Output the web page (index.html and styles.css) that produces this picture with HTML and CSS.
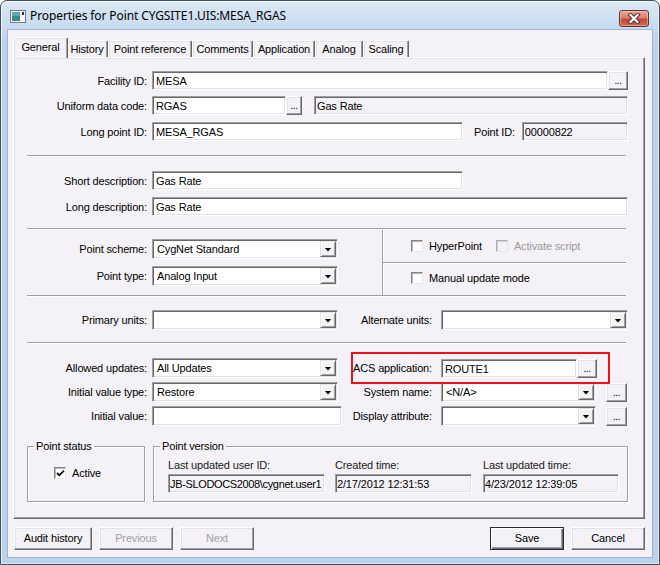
FILE: index.html
```html
<!DOCTYPE html>
<html>
<head>
<meta charset="utf-8">
<title>Properties for Point</title>
<link rel="stylesheet" href="styles.css">
</head>
<body>
<div class="window">
  <div class="titlebar">
    <svg class="appicon" width="16" height="13" viewBox="0 0 16 13">
      <rect x="0.5" y="0.5" width="15" height="12" fill="#f4f6f8" stroke="#6f7a86"/>
      <rect x="2" y="2" width="8" height="9" fill="#3a8a8c"/>
      <rect x="2" y="2" width="8" height="4" fill="#5fa9b8"/>
      <rect x="12" y="2" width="2" height="3" fill="#2b3640"/>
    </svg>
    <span class="title">Properties for Point CYGSITE1.UIS:MESA_RGAS</span>
    <div class="close">
      <svg width="14" height="11" viewBox="0 0 14 11">
        <path d="M3.5 2 L10.5 9 M10.5 2 L3.5 9" stroke="#5a2b25" stroke-width="4.2" stroke-linecap="square"/>
        <path d="M3.5 2 L10.5 9 M10.5 2 L3.5 9" stroke="#ffffff" stroke-width="2.2" stroke-linecap="square"/>
      </svg>
    </div>
  </div>

  <div class="client">
    <div class="tabs">
      <div class="tab active t-general">General</div>
      <div class="tab t-history">History</div>
      <div class="tab t-pref">Point reference</div>
      <div class="tab t-comments">Comments</div>
      <div class="tab t-app">Application</div>
      <div class="tab t-analog">Analog</div>
      <div class="tab t-scaling">Scaling</div>
    </div>

    <div class="panel">
      <div class="row">
        <span class="lbl">Facility ID:</span>
        <div class="edit grow">MESA</div>
        <div class="dots w20">...</div>
      </div>
      <div class="row mt6">
        <span class="lbl">Uniform data code:</span>
        <div class="edit w134">RGAS</div>
        <div class="dots w16">...</div>
        <div class="ro grow ml12">Gas Rate</div>
      </div>
      <div class="row mt7">
        <span class="lbl">Long point ID:</span>
        <div class="edit w311">MESA_RGAS</div>
        <span class="pid-lbl">Point ID:</span>
        <div class="ro grow">00000822</div>
      </div>

      <div class="sep mt14"></div>

      <div class="row mt14">
        <span class="lbl">Short description:</span>
        <div class="edit w311">Gas Rate</div>
      </div>
      <div class="row mt7">
        <span class="lbl">Long description:</span>
        <div class="edit grow">Gas Rate</div>
      </div>

      <div class="sep mt12"></div>

      <div class="sec3">
        <div class="sec3-left">
          <div class="row r20">
            <span class="lbl">Point scheme:</span>
            <div class="combo w186"><span class="val">CygNet Standard</span><span class="arrow"></span></div>
          </div>
          <div class="row r20 mt7">
            <span class="lbl">Point type:</span>
            <div class="combo w186"><span class="val">Analog Input</span><span class="arrow"></span></div>
          </div>
        </div>
        <div class="sec3-right">
          <div class="cbrow top">
            <span class="cb"></span><span class="cbl">HyperPoint</span>
            <span class="cb disabled ml14"></span><span class="cbl dis">Activate script</span>
          </div>
          <div class="cbrow bottom">
            <span class="cb"></span><span class="cbl">Manual update mode</span>
          </div>
        </div>
      </div>

      <div class="sep"></div>

      <div class="row r20 mt13">
        <div class="left">
          <span class="lbl">Primary units:</span>
          <div class="combo w186"><span class="val"></span><span class="arrow"></span></div>
        </div>
        <div class="right">
          <span class="rlbl">Alternate units:</span>
          <div class="combo grow"><span class="val"></span><span class="arrow"></span></div>
        </div>
      </div>

      <div class="sep mt12"></div>

      <div class="row r20 mt14">
        <div class="left">
          <span class="lbl">Allowed updates:</span>
          <div class="combo w186"><span class="val">All Updates</span><span class="arrow"></span></div>
        </div>
        <div class="right highlight">
          <span class="rlbl">ACS application:</span>
          <div class="edit w136">ROUTE1</div>
          <div class="dots w20">...</div>
        </div>
      </div>
      <div class="row r20 mt4">
        <div class="left">
          <span class="lbl">Initial value type:</span>
          <div class="combo w186"><span class="val">Restore</span><span class="arrow"></span></div>
        </div>
        <div class="right">
          <span class="rlbl">System name:</span>
          <div class="combo w155"><span class="val">&lt;N/A&gt;</span><span class="arrow"></span></div>
          <div class="dots w21 ml10">...</div>
        </div>
      </div>
      <div class="row r20 mt4">
        <div class="left">
          <span class="lbl">Initial value:</span>
          <div class="edit w190 h20"></div>
        </div>
        <div class="right">
          <span class="rlbl">Display attribute:</span>
          <div class="combo w155"><span class="val"></span><span class="arrow"></span></div>
          <div class="dots w21 ml10">...</div>
        </div>
      </div>

      <div class="groups">
        <fieldset class="grp status">
          <legend>Point status</legend>
          <div class="cbline">
            <span class="cb checked"><svg width="9" height="9" viewBox="0 0 9 9"><path d="M1 4 L3.3 6.3 L8 1.6" fill="none" stroke="#000" stroke-width="1.8"/></svg></span>
            <span class="cbl">Active</span>
          </div>
        </fieldset>
        <fieldset class="grp version">
          <legend>Point version</legend>
          <div class="vcols">
            <div class="vcol">
              <div class="vlbl">Last updated user ID:</div>
              <div class="ro w157 tight">JB-SLODOCS2008\cygnet.user1</div>
            </div>
            <div class="vcol">
              <div class="vlbl">Created time:</div>
              <div class="ro w137">2/17/2012 12:31:53</div>
            </div>
            <div class="vcol">
              <div class="vlbl">Last updated time:</div>
              <div class="ro w136">4/23/2012 12:39:05</div>
            </div>
          </div>
        </fieldset>
      </div>
    </div>

    <div class="buttons">
      <div class="btn w78">Audit history</div>
      <div class="btn w74 disabled">Previous</div>
      <div class="btn w74 disabled">Next</div>
      <div class="btn w74 default push">Save</div>
      <div class="btn w74">Cancel</div>
    </div>
  </div>
</div>
</body>
</html>
```

FILE: styles.css
```css
* { box-sizing: border-box; }
html, body { margin: 0; padding: 0; }
body {
  width: 660px;
  height: 565px;
  overflow: hidden;
  background: #ffffff;
  font-family: "Liberation Sans", Arial, sans-serif;
  font-size: 11px;
  letter-spacing: -0.15px;
  color: #000;
}

/* ---------- window frame ---------- */
.window {
  width: 660px;
  height: 565px;
  border: 1px solid #3f4e60;
  border-radius: 7px 7px 0 0;
  background: linear-gradient(#dbe8f6 0px, #c6daf0 29px, #bcd3ec 40px, #bad2ec 100%);
  padding: 0 7px 7px 7px;
  display: flex;
  flex-direction: column;
  box-shadow: inset 1px 1px 0 rgba(255,255,255,0.7), inset -1px -1px 0 rgba(255,255,255,0.5);
}
.titlebar {
  height: 29px;
  flex: none;
  display: flex;
  align-items: center;
  padding-left: 2px;
}
.appicon { flex: none; margin-top: 1px; }
.title {
  margin-left: 4px;
  font-family: "Noto Sans", "Open Sans", sans-serif;
  font-size: 12px;
  color: #000;
  letter-spacing: -0.1px;
}
.close {
  margin-left: auto;
  margin-right: 3px;
  align-self: flex-start;
  margin-top: 9px;
  width: 30px;
  height: 17px;
  border: 1px solid #6d2f27;
  border-radius: 3px;
  background: linear-gradient(#e8a494 0%, #d98270 45%, #c24a34 55%, #cd6a52 100%);
  display: flex;
  align-items: center;
  justify-content: center;
  box-shadow: inset 0 0 0 1px rgba(255,220,210,0.45);
}

.client {
  width: 644px;
  height: 527px;
  flex: none;
  background: #f4f2f6;
  display: flex;
  flex-direction: column;
  box-shadow: 0 0 0 1px rgba(110,140,175,0.45);
}

/* ---------- tabs ---------- */
.tabs {
  height: 27px;
  flex: none;
  display: flex;
  align-items: flex-end;
  padding-left: 7px;
}
.tab {
  height: 17px;
  flex: none;
  border: 1px solid;
  border-bottom: none;
  border-color: #ffffff #696969 transparent #ffffff;
  border-radius: 2px 2px 0 0;
  box-shadow: inset -1px 0 0 #a0a0a0, inset 1px 1px 0 #e3e3e3;
  text-align: center;
  line-height: 16px;
  white-space: nowrap;
  background: #f4f2f6;
}
.tab.active {
  height: 21px;
  margin: 0 -2px -1px -2px;
  position: relative;
  z-index: 2;
  line-height: 18px;
}
.t-general { width: 51px; }
.t-general.active { width: 55px; }
.t-history { width: 42px; }
.t-pref { width: 84px; }
.t-comments { width: 61px; }
.t-app { width: 62px; }
.t-analog { width: 48px; }
.t-scaling { width: 46px; }

/* ---------- panel ---------- */
.panel {
  margin-left: 5px;
  width: 632px;
  height: 462px;
  flex: none;
  border: 1px solid;
  border-color: #ffffff #696969 #696969 #ffffff;
  box-shadow: inset -1px -1px 0 #a0a0a0, inset 1px 1px 0 #e3e3e3;
  padding: 13px 16px 0 13px;
}

.row {
  display: flex;
  align-items: center;
  height: 19px;
}
.row.r20 { height: 20px; }
.mt4 { margin-top: 4px; }
.mt6 { margin-top: 6px; }
.mt7 { margin-top: 7px; }
.mt12 { margin-top: 12px; }
.mt13 { margin-top: 13px; }
.mt14 { margin-top: 14px; }
.ml10 { margin-left: 10px; }
.ml12 { margin-left: 12px; }
.ml14 { margin-left: 14px; }

.lbl {
  flex: none;
  width: 120px;
  margin-right: 5px;
  text-align: right;
  white-space: nowrap;
}
.rlbl {
  flex: none;
  width: 81px;
  margin-right: 9px;
  text-align: right;
  white-space: nowrap;
}
.pid-lbl {
  flex: none;
  margin-left: 11px;
  margin-right: 7px;
  white-space: nowrap;
}

.grow { flex: 1 1 auto; min-width: 0; }
.w16 { width: 16px; }
.w20 { width: 20px; }
.w21 { width: 21px; }
.w134 { width: 134px; }
.w136 { width: 136px; }
.w137 { width: 137px; }
.w155 { width: 155px; }
.w157 { width: 157px; }
.w186 { width: 186px; }
.w190 { width: 190px; }
.w311 { width: 311px; }
.w74 { width: 74px; }
.w78 { width: 78px; }

/* sunken fields */
.edit, .ro, .combo {
  flex-shrink: 0;
  height: 19px;
  border: 1px solid;
  border-color: #a0a0a0 #ffffff #ffffff #a0a0a0;
  box-shadow: inset 1px 1px 0 #696969, inset -1px -1px 0 #e3e3e3;
  background: #ffffff;
  padding: 0 2px 0 3px;
  line-height: 18px;
  white-space: nowrap;
  overflow: hidden;
}
.edit.grow, .ro.grow, .combo.grow { flex: 1 1 auto; }
.edit.h20 { height: 20px; line-height: 18px; }
.ro { background: #f4f2f6; padding-left: 2px; }
.ro.tight { letter-spacing: -0.35px; }
.combo {
  height: 20px;
  display: flex;
  align-items: center;
  padding: 1px;
}
.combo .val {
  flex: 1;
  padding-left: 3px;
  line-height: 17px;
  overflow: hidden;
  white-space: nowrap;
}
.combo .arrow {
  flex: none;
  width: 16px;
  height: 16px;
  border: 1px solid;
  border-color: #e3e3e3 #696969 #696969 #e3e3e3;
  box-shadow: inset 1px 1px 0 #ffffff, inset -1px -1px 0 #a0a0a0;
  background: #f4f2f6;
  display: flex;
  align-items: center;
  justify-content: center;
}
.combo .arrow::after {
  content: "";
  width: 7px;
  height: 4px;
  background: #000;
  clip-path: polygon(0 0, 100% 0, 50% 100%);
  margin-top: 1px;
}

/* small "..." buttons */
.dots {
  flex: none;
  height: 19px;
  border: 1px solid;
  border-color: #ffffff #696969 #696969 #ffffff;
  box-shadow: inset -1px -1px 0 #a0a0a0, inset 1px 1px 0 #e3e3e3;
  background: #f4f2f6;
  text-align: center;
  font-size: 10px;
  line-height: 18px;
  letter-spacing: -0.5px;
}

/* etched separators */
.sep {
  height: 2px;
  margin-right: 2px;
  border-top: 1px solid #a0a0a0;
  border-bottom: 1px solid #ffffff;
}

/* section 3 */
.sec3 {
  display: flex;
  height: 65px;
}
.sec3-left {
  width: 355px;
  flex: none;
  padding-top: 9px;
}
.sec3-right {
  flex: 1;
  margin-right: 2px;
  border-left: 1px solid #a0a0a0;
  box-shadow: inset 1px 0 0 #ffffff;
  display: flex;
  flex-direction: column;
}
.cbrow {
  display: flex;
  align-items: center;
  padding-left: 28px;
}
.cbrow.top {
  height: 33px;
  border-bottom: 1px solid #a0a0a0;
  box-shadow: 0 1px 0 #ffffff;
}
.cbrow.bottom {
  flex: 1;
  padding-bottom: 3px;
}
.cb {
  flex: none;
  width: 12px;
  height: 12px;
  border: 1px solid;
  border-color: #858585 #e8e8e8 #e8e8e8 #858585;
  box-shadow: inset 1px 1px 0 #b8b8b8;
  background: #ffffff;
  display: flex;
  align-items: center;
  justify-content: center;
}
.cb.disabled {
  border-color: #aeaeae #e6e6e6 #e6e6e6 #aeaeae;
  box-shadow: inset 1px 1px 0 #d4d4d4;
  background: #f4f2f6;
}
.cbl { margin-left: 6px; white-space: nowrap; }
.cbl.dis { color: #9a9a9a; }

/* left / right halves */
.left {
  width: 315px;
  flex: none;
  display: flex;
  align-items: center;
}
.right {
  flex: 1;
  margin-left: 9px;
  display: flex;
  align-items: center;
}
.highlight { position: relative; }
.highlight::after {
  content: "";
  position: absolute;
  left: 0;
  top: -7px;
  width: 255px;
  height: 28px;
  border: 2px solid #e8141c;
  pointer-events: none;
}

/* group boxes */
.groups {
  display: flex;
  margin-top: 14px;
  gap: 8px;
}
.grp {
  margin: 0;
  min-width: 0;
  height: 62px;
  border: 1px solid #a0a0a0;
  box-shadow: inset 1px 1px 0 #ffffff, 1px 1px 0 #ffffff;
  padding: 0 6px;
}
.grp legend {
  padding: 0 2px;
  line-height: 13px;
}
.status { width: 118px; flex: none; }
.version { width: 475px; flex: none; }
.cbline {
  display: flex;
  align-items: center;
  margin-top: 14px;
  margin-left: 20px;
}
.vcols {
  display: flex;
  margin-top: 6px;
  margin-left: 8px;
}
.vcol { flex: none; }
.vcol + .vcol { margin-left: 10px; }
.vcol:last-child { margin-left: 11px; }
.vlbl {
  line-height: 13px;
  white-space: nowrap;
  color: #1a1a1a;
}
.vcol .ro { margin-top: 2px; padding-left: 1px; }

/* bottom buttons */
.buttons {
  display: flex;
  margin-top: 8px;
  padding-left: 6px;
  gap: 7px;
}
.btn {
  flex: none;
  height: 23px;
  border: 1px solid;
  border-color: #ffffff #696969 #696969 #ffffff;
  box-shadow: inset -1px -1px 0 #a0a0a0, inset 1px 1px 0 #e3e3e3;
  background: #f4f2f6;
  text-align: center;
  line-height: 21px;
  white-space: nowrap;
}
.btn.disabled { color: #a0a0a0; }
.btn.push { margin-left: auto; }
.btn.default {
  border-color: #2a2a2a;
  box-shadow: inset 1px 1px 0 #ffffff, inset -1px -1px 0 #696969, inset -2px -2px 0 #a0a0a0;
}
.buttons .btn:last-child { margin-right: 7px; }
```
